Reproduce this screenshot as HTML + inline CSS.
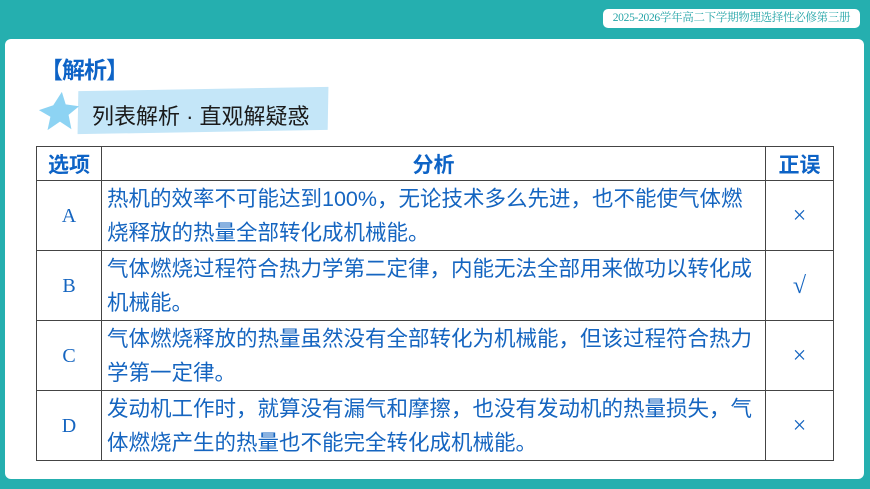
<!DOCTYPE html>
<html><head><meta charset="utf-8"><style>
*{margin:0;padding:0;box-sizing:border-box}
body{width:870px;height:489px;background:#25afaf;position:relative;overflow:hidden;font-family:"Liberation Sans","Noto Sans CJK SC",sans-serif}
.chip{position:absolute;left:603px;top:9px;width:257px;height:19px;background:#fff;border-radius:5px;color:#25a5a8;font-size:11.5px;line-height:19px;text-align:center;font-family:"Liberation Serif","Noto Serif CJK SC",serif;letter-spacing:-0.3px}
.card{position:absolute;left:5px;top:39px;width:859px;height:440px;background:#fff;border-radius:6px}
.jx{position:absolute;left:40px;top:51px;font-size:23px;font-weight:bold;color:#0d63c6;letter-spacing:-1px}
.banner{position:absolute;left:78px;top:89px;width:250px;height:43px;background:#c4e6f8;transform:skew(-2deg) rotate(-1deg)}
.bt{position:absolute;left:92px;top:99px;font-size:22px;color:#1a1a1a}
table{position:absolute;left:36px;top:146px;width:798px;border-collapse:collapse}
td,th{border:1.3px solid #444;color:#1565c0}
th{height:34px;font-size:21px;font-weight:bold;color:#0d63c6}
td{height:70px;font-size:21.5px;line-height:34px}
td.c{text-align:center;font-family:"Liberation Serif",serif;font-size:20px}
td.x{font-size:24px}
td.t{padding-left:5px;padding-top:0;white-space:nowrap}
</style></head><body>
<div class="chip">2025-2026学年高二下学期物理选择性必修第三册</div>
<div class="card"></div>
<div class="jx">【解析】</div>
<div class="banner"></div>
<svg style="position:absolute;left:37px;top:90px" width="44" height="44" viewBox="0 0 46 46"><polygon points="26,2 30,15 44,17 33,26 36,41 24,33 11,42 14,28 2,21 17,16" fill="#8dd3f3"/></svg>
<div class="bt">列表解析 · 直观解疑惑</div>
<table>
<tr><th style="width:65px">选项</th><th>分析</th><th style="width:68px">正误</th></tr>
<tr><td class="c">A</td><td class="t">热机的效率不可能达到100%，无论技术多么先进，也不能使气体燃<br>烧释放的热量全部转化成机械能。</td><td class="c x">×</td></tr>
<tr><td class="c">B</td><td class="t">气体燃烧过程符合热力学第二定律，内能无法全部用来做功以转化成<br>机械能。</td><td class="c x">√</td></tr>
<tr><td class="c">C</td><td class="t">气体燃烧释放的热量虽然没有全部转化为机械能，但该过程符合热力<br>学第一定律。</td><td class="c x">×</td></tr>
<tr><td class="c">D</td><td class="t">发动机工作时，就算没有漏气和摩擦，也没有发动机的热量损失，气<br>体燃烧产生的热量也不能完全转化成机械能。</td><td class="c x">×</td></tr>
</table>
</body></html>
